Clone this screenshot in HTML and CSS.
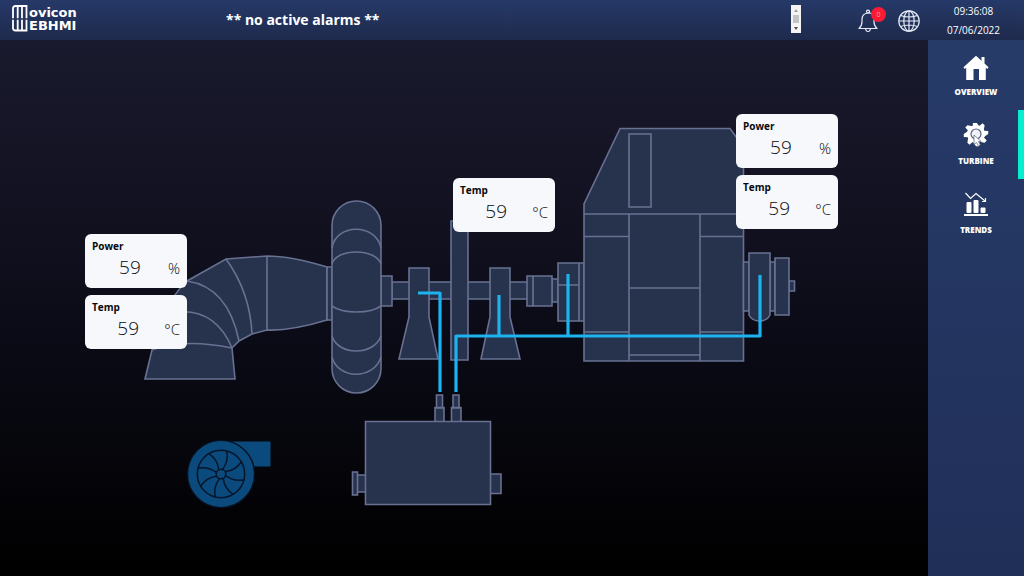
FILE: index.html
```html
<!DOCTYPE html>
<html lang="en">
<head>
<meta charset="utf-8">
<title>Movicon WebHMI - Turbine</title>
<link rel="stylesheet" href="styles.css">
</head>
<body>
<header class="topbar">
  <svg class="logo" viewBox="0 0 68 28" role="img" aria-label="Movicon WebHMI">
    <path class="logo-mark" d="M1 12.300V2.500Q1 0 3.500 0H14.500V12.300M5.700 12.300V0M10 12.300V0"/>
    <path class="logo-mark" d="M1 13.700V22Q1 24.500 3.500 24.500H14.500V13.700M5.700 24.500V13.700M10 24.500V13.700"/>
    <text class="logo-text" x="17" y="11">ovicon</text>
    <text class="logo-text" x="17" y="24">EBHMI</text>
  </svg>
  <p class="alarm-text">** no active alarms **</p>
  <div class="scroller">
    <button class="scroll-button" type="button" aria-label="Previous alarm"><svg class="scroll-icon" viewBox="0 0 10 8"><path d="M3 6l2-3 2 3z" fill="#a0a0a0"/></svg></button>
    <span class="scroll-thumb"></span>
    <button class="scroll-button" type="button" aria-label="Next alarm"><svg class="scroll-icon" viewBox="0 0 10 8"><path d="M3 3h4l-2 3z" fill="#505050"/></svg></button>
  </div>
  <button class="tool bell" type="button" aria-label="Alarms">
    <svg class="bell-icon" viewBox="0 0 20 24"><g fill="none" stroke="#e6ebf7" stroke-width="1.200" stroke-linejoin="round"><path d="M1 19.500Q4 17 4 12.500V10.500Q4 4.500 10 4T16 10.500V12.500Q16 17 19 19.500Z"/><circle cx="10" cy="2.600" r="1.500"/><path d="M7.500 19.500Q8 22.500 10 22.500T12.500 19.500"/></g></svg>
    <span class="badge">0</span>
  </button>
  <button class="tool globe" type="button" aria-label="Language">
    <svg class="globe-icon" viewBox="0 0 22 22"><g fill="none" stroke="#e6ebf7" stroke-width="1.200"><circle cx="11" cy="11" r="10.200"/><ellipse cx="11" cy="11" rx="5.200" ry="10.200"/><path d="M11 1V21M1 11H21M2.500 5.500Q11 8.500 19.500 5.500M2.500 16.500Q11 13.500 19.500 16.500"/></g></svg>
  </button>
  <div class="clock"><time>09:36:08</time><time>07/06/2022</time></div>
</header>
<div class="body">
  <main class="stage">
    <div class="canvas">
      <svg class="drawing" viewBox="0 40 928 536" role="img" aria-label="Turbine train">
        <g fill="#27324d" stroke="#687191" stroke-width="1.600">
          <path d="M145 379L152 350L163 316Q173 294 187 281L226 259L267 256Q291 256 327 267V320Q291 331 267 330L252 334L239 341L232 348L235 379Z"/>
          <g fill="none">
            <path d="M267 256V330M226 259Q250 292 252 334M187 281Q228 287 239 341M170 313Q214 305 232 348M152 350Q184 338 232 348"/>
          </g>
          <path d="M327 267H332V320H327Z"/>
          <path d="M392 282H530V299H392Z"/>
          <path d="M381 276H392V306H381Z"/>
          <rect x="332" y="201" width="49" height="192" rx="24.500"/>
          <g fill="none">
            <path d="M332 248C336 223 376 223 381 248M332 264C336 248 376 248 381 264M332 306C343 314 370 314 381 306M332 336C338 356 374 356 381 336M332 357C338 380 374 380 381 357"/>
          </g>
          <path d="M409 268H429V317L438 359H399L409 317Z"/>
          <path d="M451 221H468V360H451Z"/>
          <path d="M490 268H510V317L520 359H481L490 317Z"/>
          <path d="M552 279H558V302H552Z"/>
          <path d="M527 276H552V306H527ZM533 276V306"/>
          <path d="M579 263H584V321H579ZM558 263H579V321H558ZM558 285H579"/>
          <path d="M584 361V204L620 128.500H730L743.500 147V361Z"/>
          <path fill="none" d="M629 134H651V207H629ZM584 214H743M629 214V361M700 214V361M584 236.500H629M700 236.500H743M584 332H629M700 332H743M629 288H700M629 355H700"/>
          <path d="M743.500 262H749V311H743.500ZM770 262H775V311H770ZM789 281H794.500V291H789Z"/>
          <path d="M749 253H770V315Q767 321 759.500 321T749 315ZM775 258H789V315H775Z"/>
          <path d="M436.500 395H442.500V408H436.500ZM453 395H459V408H453ZM435 407.500H444V422H435ZM451.500 407.500H461V422H451.500Z"/>
          <path d="M352.500 472H357.500V495H352.500ZM357.500 475H366V492H357.500ZM490 474H501V493.500H490Z"/>
          <path d="M365.500 421.500H490.500V504.500H365.500Z"/>
        </g>
        <path d="M418 293H440V392M456 392V336H760V275M499 295V336M568 274V336" fill="none" stroke="#1cb3ee" stroke-width="3.200" stroke-linejoin="round"/>
        <path d="M226 441.500H270.500V466.500H245Z" fill="#0a4a7d"/>
        <circle cx="221" cy="474" r="33.600" fill="#0a4a7d" stroke="#07101f" stroke-width="1.400"/>
        <g transform="translate(221 474)" fill="none" stroke="#07152a" stroke-width="1.500">
          <circle r="23.700"/><circle r="4.800"/>
          <path id="blade" d="M1.500 -4.600Q8 -13 5.700 -23"/>
          <use href="#blade" transform="rotate(45)"/><use href="#blade" transform="rotate(90)"/><use href="#blade" transform="rotate(135)"/><use href="#blade" transform="rotate(180)"/><use href="#blade" transform="rotate(225)"/><use href="#blade" transform="rotate(270)"/><use href="#blade" transform="rotate(315)"/>
        </g>
      </svg>
      <section class="card inlet-power"><h2 class="card-title">Power</h2><p class="reading"><span class="value">59</span><span class="unit">%</span></p></section>
      <section class="card inlet-temp"><h2 class="card-title">Temp</h2><p class="reading"><span class="value">59</span><span class="unit">°C</span></p></section>
      <section class="card shaft-temp"><h2 class="card-title">Temp</h2><p class="reading"><span class="value">59</span><span class="unit">°C</span></p></section>
      <section class="card generator-power"><h2 class="card-title">Power</h2><p class="reading"><span class="value">59</span><span class="unit">%</span></p></section>
      <section class="card generator-temp"><h2 class="card-title">Temp</h2><p class="reading"><span class="value">59</span><span class="unit">°C</span></p></section>
    </div>
  </main>
  <nav class="sidebar" aria-label="Pages">
    <a class="nav-item" href="#overview">
      <svg class="nav-icon" viewBox="0 -1 26 26"><path fill="#fff" d="M13 .8L18.500 5.800V2H21.500V8.500L25.500 12.300L24.300 14L22.800 12.800V25H16V14H10.500V25H3.200V12.800L1.700 14L.5 12.300Z"/></svg>
      OVERVIEW
    </a>
    <a class="nav-item active" href="#turbine" aria-current="page">
      <svg class="nav-icon" viewBox="-13 -11 26 26">
        <g fill="#fff"><circle r="9"/><path id="tooth" d="M-3.200 -8L-3 -12.200L0 -12.200Q1.500 -10 3 -8Z"/>
        <use href="#tooth" transform="rotate(45)"/><use href="#tooth" transform="rotate(90)"/><use href="#tooth" transform="rotate(135)"/><use href="#tooth" transform="rotate(180)"/><use href="#tooth" transform="rotate(225)"/><use href="#tooth" transform="rotate(270)"/><use href="#tooth" transform="rotate(315)"/></g>
        <circle r="5" fill="#f1f3f8" stroke="#586482" stroke-width="1.200"/>
        <path d="M-2 1V10.500L.5 8.500L2.500 12L4.300 11L2.500 7.500H5.200Z" fill="#fff" stroke="#69728c" stroke-width=".8"/>
      </svg>
      TURBINE
    </a>
    <a class="nav-item" href="#trends">
      <svg class="nav-icon" viewBox="0 0 26 26"><g fill="#fff"><rect x="1" y="22" width="24" height="2"/><rect x="3.500" y="10" width="5" height="11" rx="1"/><rect x="10.500" y="8" width="5" height="13" rx="1"/><rect x="17.500" y="15.500" width="5" height="5.500" rx="1"/></g><path d="M2.500 1L7.500 6.500L13 1.500L22 9M22.500 6V9.500H19" fill="none" stroke="#fff" stroke-width="1.200"/></svg>
      TRENDS
    </a>
  </nav>
</div>
</body>
</html>
```

FILE: styles.css
```css
* { box-sizing: border-box; }

body {
  margin: 0;
  min-height: 100vh;
  display: flex;
  flex-direction: column;
  background: #000;
  color: #fff;
  font-family: "Open Sans", "Noto Sans", sans-serif;
}

h2, p { margin: 0; }

button {
  padding: 0;
  border: 0;
  background: none;
  color: inherit;
  font: inherit;
}

.topbar {
  display: flex;
  align-items: center;
  height: 40px;
  padding-left: 12px;
  background: linear-gradient(#263968, #1e2a4c);
}

.logo {
  width: 68px;
  height: 28px;
  overflow: visible;
}

.logo-mark {
  fill: none;
  stroke: #fff;
  stroke-width: 1.8;
}

.logo-text {
  fill: #fff;
  font: 700 13px "DejaVu Sans", sans-serif;
}

.alarm-text {
  flex: 1;
  margin-left: 146px;
  font-size: 14px;
  font-weight: 700;
  line-height: 20px;
}

.scroller {
  display: flex;
  flex-direction: column;
  width: 10px;
  height: 28px;
  margin: 0 57px 2px 0;
  background: #f4f4f4;
}

.scroll-button {
  flex: 1;
  display: flex;
}

.scroll-icon {
  width: 10px;
  height: 10px;
}

.scroll-thumb {
  height: 8px;
  margin: 0 2px;
  background: #c3c3c3;
}

.tool {
  position: relative;
  display: flex;
  margin-top: 2px;
}

.bell {
  width: 28px;
  margin-right: 12px;
}

.bell-icon {
  width: 20px;
  height: 24px;
}

.badge {
  position: absolute;
  top: -2px;
  right: 0;
  width: 15px;
  height: 15px;
  border-radius: 50%;
  background: #fb1b35;
  color: #ff9aa5;
  font-size: 7px;
  line-height: 15px;
  text-align: center;
}

.globe { margin-right: 3px; }

.globe-icon {
  width: 22px;
  height: 22px;
}

.clock {
  display: flex;
  flex-direction: column;
  width: 101px;
  padding-top: 2px;
  text-align: center;
  font-size: 10px;
  line-height: 19px;
}

.body {
  flex: 1;
  display: flex;
}

.stage {
  flex: 1;
  min-width: 0;
  overflow: hidden;
  background: linear-gradient(#1a1a2e, #0b0b17 55%, #000);
}

.canvas { position: relative; }

.drawing {
  display: block;
  width: 928px;
  height: 536px;
}

.card {
  position: absolute;
  width: 102px;
  padding: 4px 7px 6px;
  border-radius: 6px;
  background: #f7f8fb;
  color: #08090c;
}

.card-title {
  font-size: 10px;
  font-weight: 700;
  line-height: 16px;
}

.reading {
  display: flex;
  align-items: baseline;
  line-height: 27px;
}

.value {
  flex: 1;
  font-size: 19px;
  font-weight: 300;
  text-align: center;
}

.unit {
  font-size: 15px;
  font-weight: 300;
}

.inlet-power { left: 85px; top: 194px; }
.inlet-temp { left: 85px; top: 255px; }
.shaft-temp { left: 453px; top: 138px; }
.generator-power { left: 736px; top: 74px; }
.generator-temp { left: 736px; top: 135px; }

.sidebar {
  width: 96px;
  padding-top: 1px;
  background: linear-gradient(#273b69, #202f58);
}

.nav-item {
  display: flex;
  flex-direction: column;
  align-items: center;
  gap: 6px;
  height: 69px;
  padding-top: 13px;
  border-left: 6px solid transparent;
  border-right: 6px solid transparent;
  color: #fff;
  font-size: 8px;
  font-weight: 800;
  line-height: 12px;
  text-decoration: none;
}

.nav-item.active { border-right-color: #09edcf; }

.nav-icon {
  width: 26px;
  height: 26px;
}
```
